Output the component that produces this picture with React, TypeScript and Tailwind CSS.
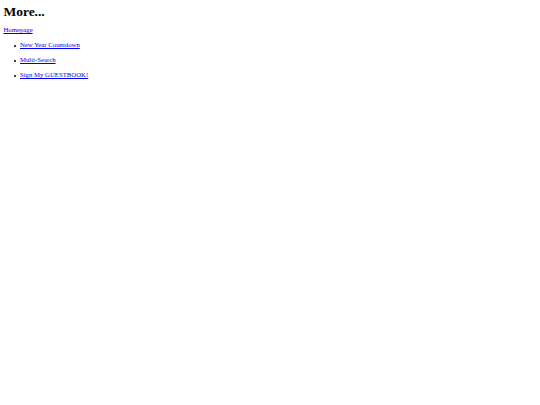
export default function App() {
  const links = ['New Year Countdown', 'Multi-Search', 'Sign My GUESTBOOK!']

  return (
    <div className="min-h-[405px] bg-white pl-[3.4px] pt-[3.5px] font-['Liberation_Serif','Times_New_Roman',serif] text-black">
      <h1 className="text-[13.5px] font-bold leading-[15.5px]">More...</h1>
      <a href="#" className="mt-[7.3px] block w-fit text-[6.75px] leading-[7.8px] text-[#0000ee] underline">
        Homepage
      </a>
      <ul className="mt-[3.1px] pl-[10.3px] text-[6.75px]">
        {links.map((l) => (
          <li key={l} className="flex items-center leading-[15px]">
            <span className="mr-[4.3px] mt-[1.8px] size-[2px] shrink-0 rounded-full bg-black" />
            <a href="#" className="text-[#0000ee] underline">{l}</a>
          </li>
        ))}
      </ul>
    </div>
  )
}
